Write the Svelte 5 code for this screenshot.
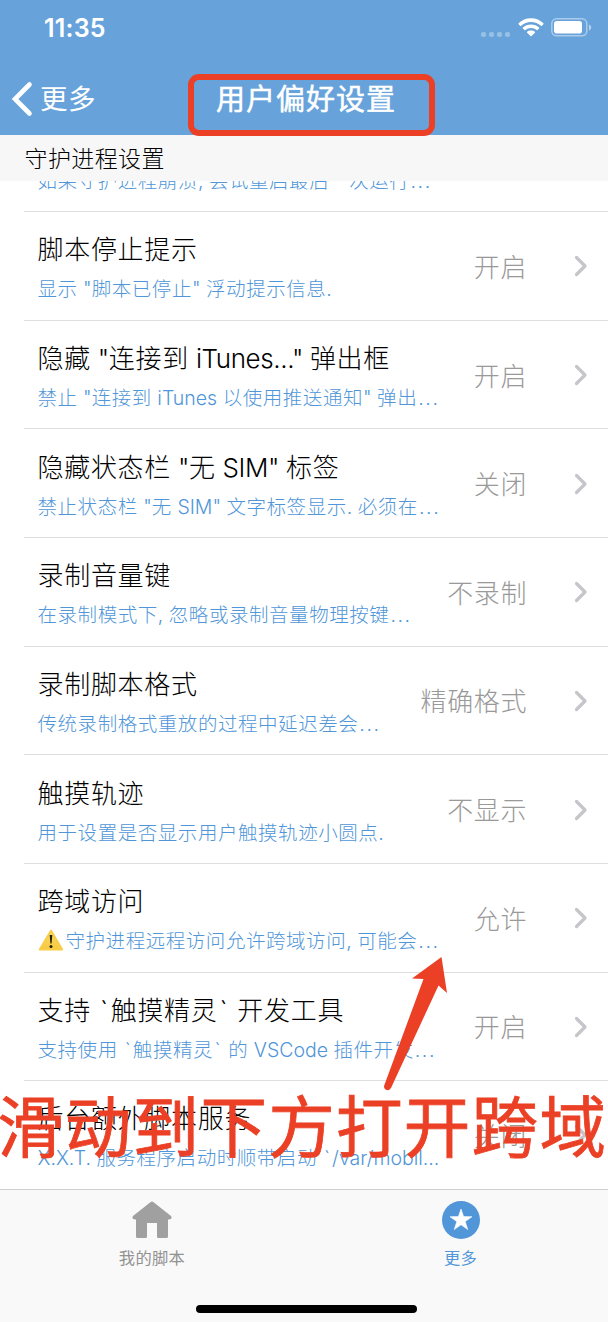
<script lang="ts">
  type Row = { title: string; desc: string; value: string; warn?: boolean };

  const rows: Row[] = [
    { title: "", desc: "如果守护进程崩溃, 尝试重启最后一次运行…", value: "" },
    { title: "脚本停止提示", desc: '显示 "脚本已停止" 浮动提示信息.', value: "开启" },
    { title: '隐藏 "连接到 iTunes..." 弹出框', desc: '禁止 "连接到 iTunes 以使用推送通知" 弹出…', value: "开启" },
    { title: '隐藏状态栏 "无 SIM" 标签', desc: '禁止状态栏 "无 SIM" 文字标签显示. 必须在…', value: "关闭" },
    { title: "录制音量键", desc: "在录制模式下, 忽略或录制音量物理按键…", value: "不录制" },
    { title: "录制脚本格式", desc: "传统录制格式重放的过程中延迟差会…", value: "精确格式" },
    { title: "触摸轨迹", desc: "用于设置是否显示用户触摸轨迹小圆点.", value: "不显示" },
    { title: "跨域访问", desc: "守护进程远程访问允许跨域访问, 可能会…", value: "允许", warn: true },
    { title: "支持 `触摸精灵` 开发工具", desc: "支持使用 `触摸精灵` 的 VSCode 插件开发…", value: "开启" },
    { title: "后台额外脚本服务", desc: "X.X.T. 服务程序启动时顺带启动 `/var/mobil...", value: "关闭" },
  ];

  // Latin runs, backticks and the ellipsis are tracked differently from Chinese.
  function runs(text: string) {
    return (text.match(/`|…|[ -_a-~]+|[^ -~…]+/g) ?? []).map((s) => ({
      s: s === "…" ? "..." : s,
      kind: s === "`" ? "tick" : s === "…" ? "dots3" : /^[ -~]/.test(s) ? "latin" : "han",
    }));
  }
</script>

{#snippet mixed(text: string)}{#each runs(text) as r}<span class={r.kind}>{r.s}</span>{/each}{/snippet}

<div class="screen">
  <header>
    <div class="status">
      <span class="time">11:35</span>
      <span class="dots"><i></i><i></i><i></i><i></i></span>
      <svg class="wifi" width="26" height="19" viewBox="0 0 26 19" fill="#fff">
        <path d="M13 0.3C17.9 0.3 22.3 2.2 25.4 5.3Q25.8 5.8 25.4 6.3L23.9 7.8Q23.4 8.2 22.9 7.8C20.3 5.3 16.8 3.9 13 3.9S5.7 5.3 3.1 7.8Q2.6 8.2 2.1 7.8L.6 6.3Q.2 5.8 .6 5.3C3.7 2.2 8.1 .3 13 .3Z" />
        <path d="M13 6.4C16.2 6.4 19 7.6 21.1 9.6Q21.6 10.1 21.1 10.6L19.5 12.1Q19.1 12.5 18.6 12.1C17.1 10.8 15.2 10 13 10S8.9 10.8 7.4 12.1Q6.9 12.5 6.5 12.1L4.9 10.6Q4.4 10.1 4.9 9.6C7 7.6 9.8 6.4 13 6.4Z" />
        <path d="M13 12.4C14.6 12.4 15.9 12.9 16.9 13.8Q17.3 14.3 16.9 14.7L13.5 18.1Q13 18.5 12.5 18.1L9.1 14.7Q8.7 14.3 9.1 13.8C10.1 12.9 11.4 12.4 13 12.4Z" />
      </svg>
      <svg class="battery" width="41" height="19" viewBox="0 0 41 19">
        <rect x="0.8" y="0.8" width="35" height="17" rx="4.8" fill="none" stroke="#fff" stroke-opacity=".45" stroke-width="1.5" />
        <rect x="3" y="3" width="28" height="12.6" rx="2.8" fill="#fff" />
        <path d="M38 6.5C40.9 7.5 40.9 11.5 38 12.5Z" fill="#fff" fill-opacity=".5" />
      </svg>
    </div>
    <nav>
      <svg class="back" width="22" height="36" viewBox="0 0 22 36">
        <path d="M18.5 3.5L4 18L18.5 32.5" fill="none" stroke="#fff" stroke-width="4.6" stroke-linecap="round" />
      </svg>
      <span class="back-label">更多</span>
      <h1>用户偏好设置</h1>
    </nav>
  </header>

  <h2>守护进程设置</h2>

  <main>
    {#each rows as row}
      <div class="row">
        <div class="text">
          <div class="title">{@render mixed(row.title)}</div>
          <div class="desc">
            {#if row.warn}
              <svg class="warn" width="26" height="22" viewBox="0 0 26 22">
                <defs>
                  <linearGradient id="amber" x1="0" y1="0" x2="0" y2="1">
                    <stop offset="0" stop-color="#f6dc62" />
                    <stop offset="1" stop-color="#f9c83f" />
                  </linearGradient>
                </defs>
                <path d="M13 1.5L24.3 20.5H1.7Z" fill="url(#amber)" stroke="#f8cd48" stroke-width="1.8" stroke-linejoin="round" />
                <path d="M11.7 6H14.3L13.6 14.5H12.4Z" fill="#26210f" />
                <circle cx="13" cy="17.5" r="1.5" fill="#26210f" />
              </svg>
            {/if}
            <span class="line">{@render mixed(row.desc)}</span>
          </div>
        </div>
        <div class="value">{row.value}</div>
        <svg class="chevron" width="14" height="22" viewBox="0 0 14 22">
          <path d="M2.5 2.5L11 11L2.5 19.5" fill="none" stroke="#c5c5ca" stroke-width="3.2" stroke-linecap="round" stroke-linejoin="round" />
        </svg>
      </div>
    {/each}
  </main>

  <footer>
    <div class="tab">
      <svg width="40" height="38" viewBox="0 0 40 38" fill="#a0a0a0">
        <path d="M18.7 1Q20 0 21.3 1L38.7 14.7Q40.2 16.2 39 17.8Q38.3 18.7 36.5 18.6H36V35.5Q36 37 34.5 37H26.5Q25 37 25 35.5V22H15V35.5Q15 37 13.5 37H5.5Q4 37 4 35.5V18.6H3.5Q1.7 18.7 1 17.8Q-.2 16.2 1.3 14.7Z" />
      </svg>
      <span>我的脚本</span>
    </div>
    <div class="tab active">
      <svg width="40" height="38" viewBox="0 0 40 38">
        <circle cx="20" cy="19" r="19" fill="#5096d8" />
        <path d="M20 8L22.6 15.6L31 15.7L24.2 20.6L26.8 28.6L20 23.8L13.2 28.6L15.8 20.6L9 15.7L17.4 15.6Z" fill="#fff" stroke="#fff" stroke-width=".6" stroke-linejoin="round" />
      </svg>
      <span>更多</span>
    </div>
  </footer>
  <div class="home-bar"></div>

  <!-- tutorial marks drawn over the page -->
  <div class="mark-box"></div>
  <svg class="mark-arrow" width="40" height="140" viewBox="408 955 40 140">
    <path d="M441.5 957L447 993L438.5 985.5L391 1088Q388.5 1091.5 385.5 1089.5Q383.5 1088 384.2 1085.5L423.5 979L412 978.5Z" fill="#eb4025" />
  </svg>
  <div class="mark-text">滑动到下方打开跨域</div>
</div>

<style>
  .screen {
    position: relative;
    width: 608px;
    height: 1322px;
    overflow: hidden;
    display: flex;
    flex-direction: column;
    background: #fff;
    font-family: Inter, "Noto Sans CJK SC", sans-serif;
    font-weight: 300;
    white-space: nowrap;
  }
  :global(body) {
    margin: 0;
  }
  header {
    flex: none;
    height: 135px;
    background: #67a3da;
    color: #fff;
  }
  .status {
    display: flex;
    align-items: center;
    height: 55px;
    padding: 0 16px 0 44px;
  }
  .time {
    flex: 1;
    font-size: 25px;
    font-weight: 600;
    letter-spacing: 0.2px;
  }
  .dots {
    display: flex;
    gap: 3px;
    margin: 13px 8px 0 0;
  }
  .dots i {
    width: 5px;
    height: 5px;
    border-radius: 2px;
    background: #96c0e5;
  }
  .battery {
    margin-left: 7px;
  }
  nav {
    display: grid;
    grid-template-columns: 40px 176px auto;
    align-items: center;
    height: 88px;
  }
  .back {
    margin-left: 11px;
  }
  .back-label {
    padding-bottom: 4px;
    font-size: 27.5px;
    font-weight: 400;
    letter-spacing: 0.5px;
  }
  h1 {
    margin: 0;
    padding-bottom: 5px;
    font-size: 29px;
    font-weight: 400;
    letter-spacing: 1px;
    -webkit-text-stroke: 0.5px #fff;
  }
  h2 {
    flex: none;
    box-sizing: border-box;
    height: 46px;
    margin: 0;
    padding-left: 24.5px;
    background: #f7f7f7;
    font-size: 23px;
    font-weight: 300;
    line-height: 48px;
    letter-spacing: 0.4px;
  }
  main {
    flex: none;
    height: 1008px;
    overflow: hidden;
    display: flex;
    flex-direction: column;
  }
  .row {
    flex: none;
    box-sizing: border-box;
    height: 108.64px;
    margin-left: 24px;
    padding: 0 20px 0 13.5px;
    border-bottom: 1px solid #dedee0;
    display: flex;
    align-items: center;
  }
  .row:first-child {
    margin-top: -77.5px;
  }
  .text {
    flex: 1;
    padding-top: 5px;
  }
  .title {
    height: 39px;
    line-height: 40px;
    font-size: 26px;
    letter-spacing: 0.7px;
    color: #000;
    white-space: pre;
  }
  .title .latin {
    letter-spacing: -0.4px;
  }
  .desc {
    display: flex;
    align-items: center;
    height: 37px;
    font-size: 19.5px;
    letter-spacing: 0.55px;
    color: #5096d8;
  }
  .line {
    white-space: pre;
  }
  .desc .latin {
    letter-spacing: 0;
  }
  .tick {
    margin: 0 0.08em;
  }
  .dots3 {
    margin-left: 1px;
    letter-spacing: 1.6px;
  }
  .warn {
    margin-right: 2px;
  }
  .value {
    padding-bottom: 1px;
    font-size: 26px;
    letter-spacing: 0.6px;
    color: #999;
  }
  .chevron {
    margin: 1px 0 0 47px;
  }
  footer {
    flex: none;
    box-sizing: border-box;
    height: 133px;
    padding-top: 11px;
    border-top: 1px solid #d0d0d0;
    background: #f9f9f9;
    display: grid;
    grid-template-columns: 304px 313px;
  }
  .tab {
    display: flex;
    flex-direction: column;
    align-items: center;
    font-size: 16.3px;
    font-weight: 400;
    line-height: 38px;
    letter-spacing: 0.3px;
    color: #929292;
  }
  .active {
    color: #5096d8;
  }
  .home-bar {
    position: absolute;
    left: 196px;
    bottom: 9px;
    width: 221px;
    height: 8px;
    border-radius: 4px;
    background: #000;
  }
  .mark-box {
    position: absolute;
    box-sizing: border-box;
    left: 188px;
    top: 74px;
    width: 247px;
    height: 62px;
    border: 6px solid #eb4025;
    border-radius: 11px;
  }
  .mark-arrow {
    position: absolute;
    left: 408px;
    top: 955px;
    overflow: visible;
  }
  .mark-text {
    position: absolute;
    left: -3px;
    top: 1078px;
    line-height: 100px;
    font-size: 66.5px;
    font-weight: 400;
    letter-spacing: 1.3px;
    color: #eb4025;
    -webkit-text-stroke: 0.8px #eb4025;
  }
</style>
